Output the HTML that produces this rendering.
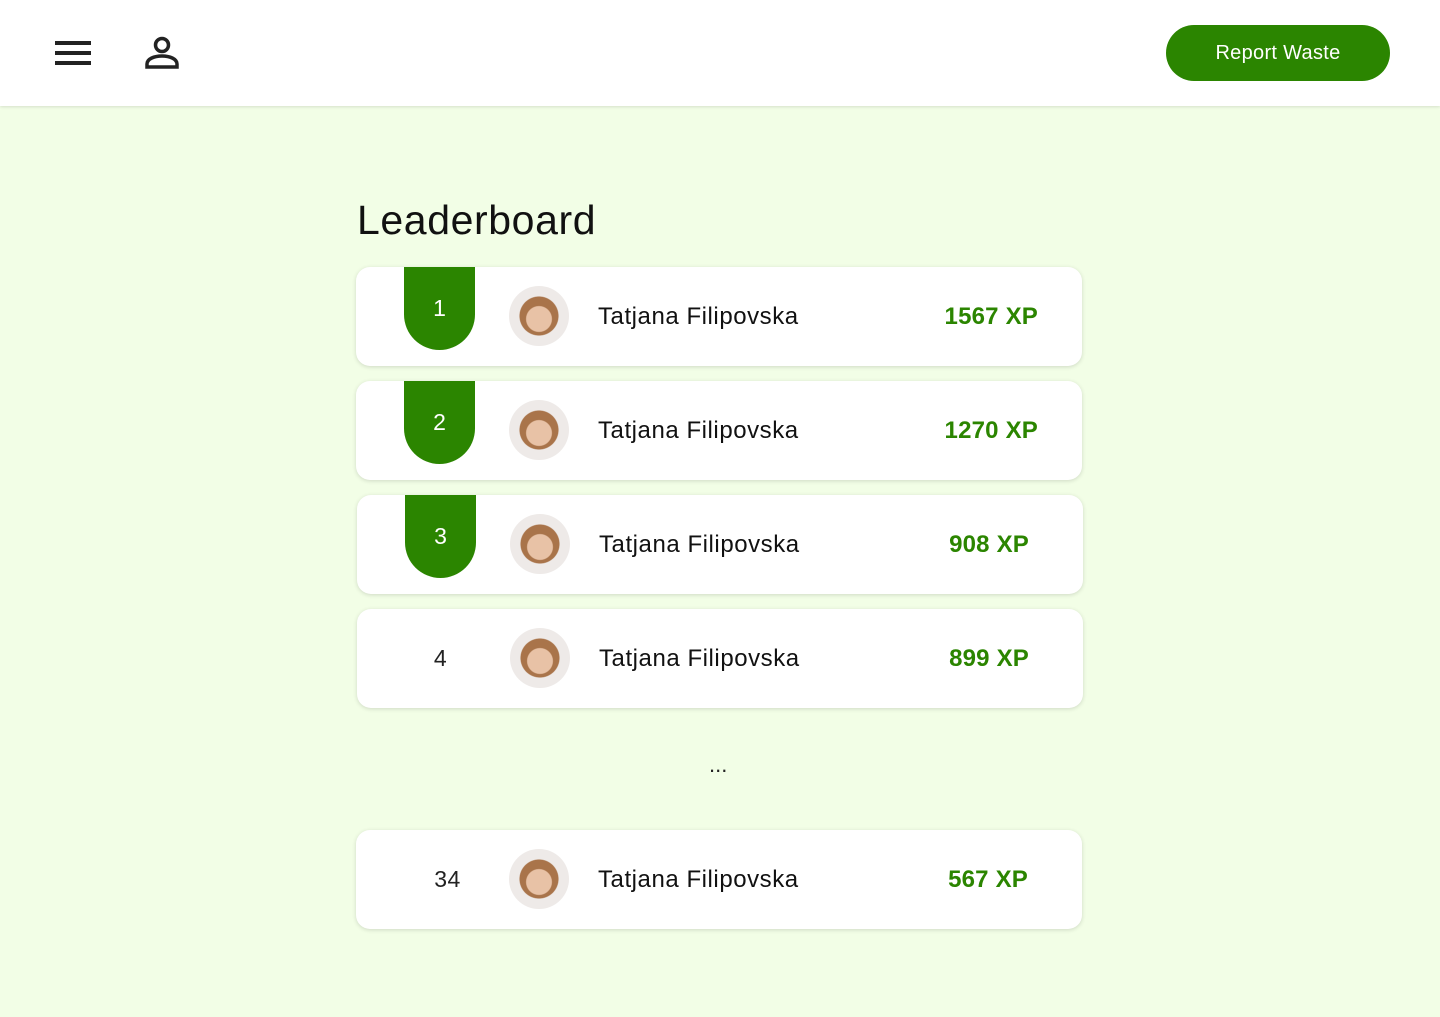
<!DOCTYPE html><html><head><style>
body{margin:0;width:1440px;height:1017px;background:#f2fee6;font-family:"Liberation Sans",sans-serif;position:relative;overflow:hidden}
.top{position:absolute;left:0;top:0;width:1440px;height:106px;background:#fff;box-shadow:0 1px 3px rgba(0,0,0,.12)}
.btn{position:absolute;left:1166px;top:25px;width:224px;height:56px;border-radius:28px;background:#2b8500;color:#fff;font-size:20px;line-height:56px;text-align:center;letter-spacing:0.3px}
h1{position:absolute;left:357px;top:197px;margin:0;font-weight:normal;font-size:41px;color:#111;letter-spacing:0.6px}
.card{position:absolute;width:726px;height:99px;background:#fff;border-radius:14px;box-shadow:0 1px 4px rgba(0,0,0,.15)}
.badge{position:absolute;left:48px;top:0;width:71px;height:83px;background:#2b8500;border-radius:0 0 36px 36px;color:#fff;font-size:23px;text-align:center;line-height:82px}
.rank{position:absolute;left:48px;width:71px;top:0;line-height:99px;text-align:center;font-size:23px;color:#222;letter-spacing:0.5px}
.av{position:absolute;left:153px;top:19px;width:60px;height:60px;border-radius:50%;background:radial-gradient(circle at 50% 55%,#e8c2a6 0 28%,transparent 30%),radial-gradient(circle at 50% 50%,#a9744a 0 45%,#eeeae8 47%)}
.name{position:absolute;left:242px;top:0;line-height:99px;font-size:24px;color:#111;letter-spacing:0.55px}
.xp{position:absolute;right:44px;top:0;line-height:99px;font-size:24px;font-weight:bold;color:#2b8500;letter-spacing:0.2px}
</style></head><body>
<div class="top">
<svg style="position:absolute;left:55px;top:40px" width="36" height="26"><g stroke="#222" stroke-width="4"><line x1="0" y1="3" x2="36" y2="3"/><line x1="0" y1="13" x2="36" y2="13"/><line x1="0" y1="23" x2="36" y2="23"/></g></svg>
<svg style="position:absolute;left:145px;top:36px" width="34" height="34" fill="none" stroke="#222" stroke-width="3.5"><circle cx="17" cy="9" r="6.5"/><path d="M2 31v-3c0-5 7-8 15-8s15 3 15 8v3z"/></svg>
<div class="btn">Report Waste</div>
</div>
<h1>Leaderboard</h1>
<div class="card" style="left:356px;top:267px"><div class="badge">1</div><div class="av"></div><div class="name">Tatjana Filipovska</div><div class="xp">1567 XP</div></div>
<div class="card" style="left:356px;top:381px"><div class="badge">2</div><div class="av"></div><div class="name">Tatjana Filipovska</div><div class="xp">1270 XP</div></div>
<div class="card" style="left:357px;top:495px"><div class="badge">3</div><div class="av"></div><div class="name">Tatjana Filipovska</div><div class="xp" style="right:54px">908 XP</div></div>
<div class="card" style="left:357px;top:609px"><div class="rank">4</div><div class="av"></div><div class="name">Tatjana Filipovska</div><div class="xp" style="right:54px">899 XP</div></div>
<div style="position:absolute;left:709px;top:752px;font-size:22px;color:#222">...</div>
<div class="card" style="left:356px;top:830px"><div class="rank" style="left:56px">34</div><div class="av"></div><div class="name">Tatjana Filipovska</div><div class="xp" style="right:54px">567 XP</div></div>
</body></html>
